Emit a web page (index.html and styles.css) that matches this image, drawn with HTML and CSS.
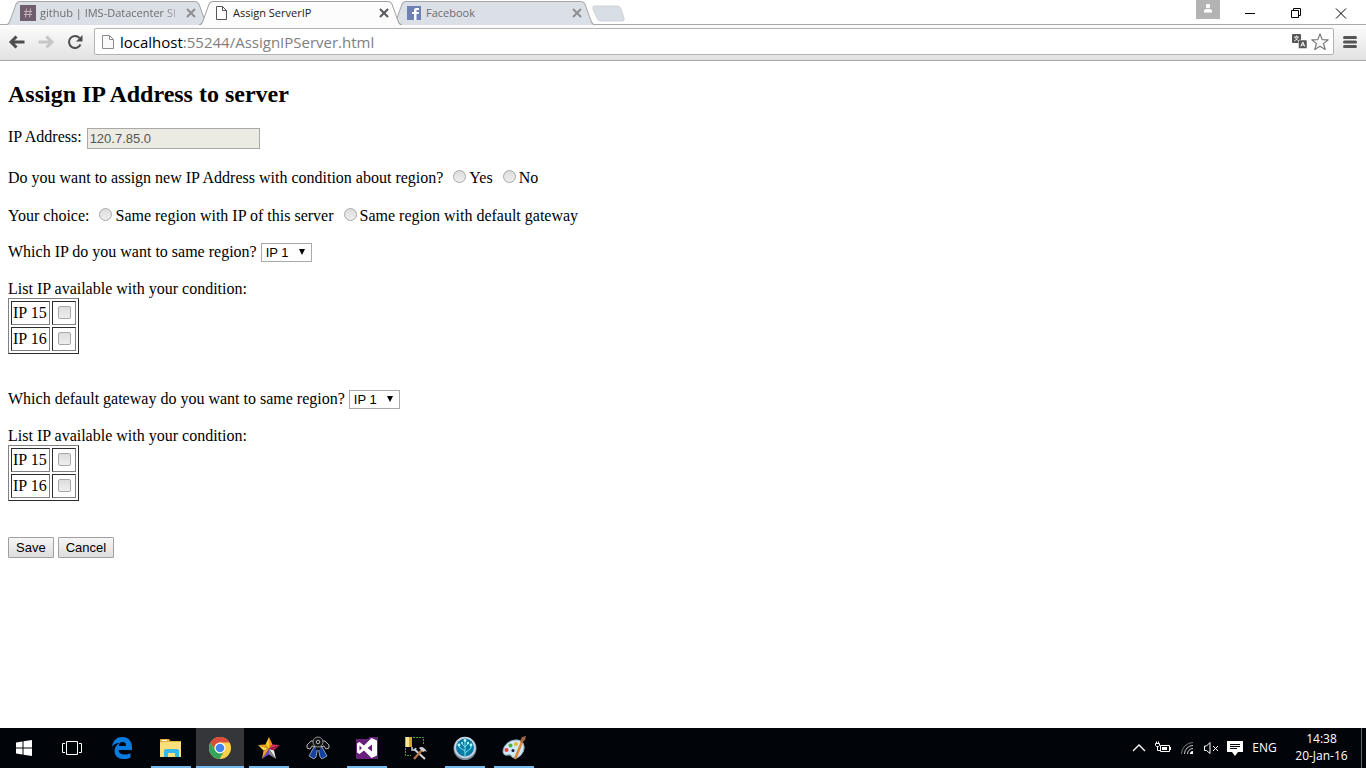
FILE: index.html
```html
<!DOCTYPE html>
<html lang="en">
<head>
<meta charset="utf-8">
<title>Assign ServerIP</title>
<link rel="stylesheet" href="styles.css">
</head>
<body>
<header class="browser">
  <div class="tabstrip">
    <div class="tab">
      <svg class="tab-shape" viewBox="0 0 203 24" preserveAspectRatio="none"><path d="M0 24C3 23.500 3 22 4 20L10 4C11 2 12 1.500 14 1.500H189C191 1.500 192 2 193 4L199 20C200 22 200 23.500 203 24" fill="#dbdfe6" stroke="#a3a6aa"/></svg>
      <svg class="favicon" viewBox="0 0 16 16"><path fill="#705e6d" d="M0 0h16v16H0z"/><path d="M6.500 3.500l-1 9M10.500 3.500l-1 9M4 6.500h8M4 9.500h8" stroke="#c3b3bf" fill="none"/></svg>
      <a class="tab-title faded" href="#">github | IMS-Datacenter SI</a>
      <button class="tab-close" aria-label="Close github tab"><svg viewBox="0 0 8 8"><path d="M0 0l8 8M8 0L0 8"/></svg></button>
    </div>
    <div class="tab active">
      <svg class="tab-shape" viewBox="0 0 203 24" preserveAspectRatio="none"><path d="M0 24C3 23.500 3 22 4 20L10 4C11 2 12 1.500 14 1.500H189C191 1.500 192 2 193 4L199 20C200 22 200 23.500 203 24" fill="#fcfcfc" stroke="#a0a0a0"/></svg>
      <svg class="favicon" viewBox="0 0 16 16"><path d="M3.500 1.500h6l4 4v9h-10zM9.500 1.500v4h4" fill="#fff" stroke="#555"/></svg>
      <a class="tab-title" href="#">Assign ServerIP</a>
      <button class="tab-close" aria-label="Close Assign ServerIP tab"><svg viewBox="0 0 8 8"><path d="M0 0l8 8M8 0L0 8"/></svg></button>
    </div>
    <div class="tab">
      <svg class="tab-shape" viewBox="0 0 203 24" preserveAspectRatio="none"><path d="M0 24C3 23.500 3 22 4 20L10 4C11 2 12 1.500 14 1.500H189C191 1.500 192 2 193 4L199 20C200 22 200 23.500 203 24" fill="#dbdfe6" stroke="#a3a6aa"/></svg>
      <svg class="favicon" viewBox="0 0 16 16"><path fill="#6f80b5" d="M1 1h14v14H1z"/><path fill="#fff" d="M8 15V9H6V7h2V5.500C8 3.500 9 3 11 3h2v2h-1.500c-1 0-1 .5-1 1v1H13l-.4 2h-2.100v6z"/></svg>
      <a class="tab-title" href="#">Facebook</a>
      <button class="tab-close" aria-label="Close Facebook tab"><svg viewBox="0 0 8 8"><path d="M0 0l8 8M8 0L0 8"/></svg></button>
    </div>
    <button class="new-tab" aria-label="New tab"><svg viewBox="0 0 34 17"><path d="M3 1H25q3 0 4 3l3 9q1 3-2 3H9q-3 0-4-3L1 4q-1-3 2-3z" fill="#d9dee5" stroke="#cdd1d8"/></svg></button>
    <div class="window-controls">
      <button class="profile" aria-label="Profile"><svg viewBox="0 0 24 19"><circle cx="12" cy="6" r="2.200"/><path d="M8 12.500V11q0-2 2.500-2h3q2.500 0 2.500 2v1.500z"/></svg></button>
      <button class="win" aria-label="Minimize"><svg viewBox="0 0 12 12"><path d="M1 6.500h10"/></svg></button>
      <button class="win" aria-label="Restore"><svg viewBox="0 0 12 12"><path d="M1.500 3.500h7v7h-7zM3.500 3V1.500h7v7H9"/></svg></button>
      <button class="win" aria-label="Close"><svg viewBox="0 0 12 12"><path d="M1 1.500l10 10M11 1.500l-10 10"/></svg></button>
    </div>
  </div>
  <div class="toolbar">
    <button class="nav" aria-label="Back"><svg viewBox="0 0 16 14"><path d="M15.500 7H2M7.500 1.500L2 7l5.500 5.500" stroke="#4d4d4d"/></svg></button>
    <button class="nav" aria-label="Forward"><svg viewBox="0 0 16 14"><path d="M.500 7H14M8.500 1.500L14 7l-5.500 5.500" stroke="#c6c6c6"/></svg></button>
    <button class="nav reload" aria-label="Reload"><svg viewBox="0 0 16 16"><path d="M13.500 10.500A6 6 0 1 1 12.500 4" stroke="#4d4d4d"/><path d="M15.500 1v6.500H9z" fill="#4d4d4d" stroke="none"/></svg></button>
    <div class="address">
      <svg class="page-icon" viewBox="0 0 14 16"><path d="M1.500 1.500h7l4 4v9h-11zM8.500 1.500v4h4" fill="#fafafa" stroke="#8c8c8c"/></svg>
      <span class="url" role="textbox" aria-label="Address"><b>localhost</b>:55244/AssignIPServer.html</span>
      <button class="tool translate" aria-label="Translate"><svg viewBox="0 0 15 15"><rect width="9" height="9" rx="1" fill="#555"/><path d="M2 3h5M4.500 1.500V3M6 3Q5 6 2 7M3 3q1 3 4 4" stroke="#fff" fill="none" stroke-width=".8"/><rect x="6.500" y="6" width="8.500" height="8.500" rx="1" fill="#555" stroke="#fff" stroke-width=".5"/><path d="M8.800 12.500l2-4.500 2 4.500M9.500 11h2.600" stroke="#fff" fill="none"/></svg></button>
      <button class="tool star" aria-label="Bookmark"><svg viewBox="0 0 18 18"><path d="M9 1l2.200 5.600 6 .2-4.700 3.800 1.700 5.900L9 13.200l-5.200 3.300 1.700-5.900L.8 6.800l6-.2z" fill="#fff" stroke="#777" stroke-width="1.200" stroke-linejoin="round"/></svg></button>
    </div>
    <button class="nav menu" aria-label="Menu"><svg viewBox="0 0 14 14"><path d="M1.500 2.500h11M1.500 7h11M1.500 11.500h11" stroke="#555" stroke-linecap="round" stroke-width="3"/></svg></button>
  </div>
</header>

<main class="page">
  <form>
    <h2>Assign IP Address to server</h2>
    <p class="row field"><label for="ip">IP Address:</label><input class="ip-field" id="ip" type="text" value="120.7.85.0" disabled></p>
    <p class="row">Do you want to assign new IP Address with condition about region?
      <input id="yes" type="radio" name="condition"><label for="yes">Yes</label>
      <input id="no" type="radio" name="condition"><label for="no">No</label></p>
    <p class="row">Your choice:
      <input id="same-ip" type="radio" name="choice"><label for="same-ip">Same region with IP of this server</label>
      <input id="same-gw" type="radio" name="choice"><label for="same-gw">Same region with default gateway</label></p>
    <section class="group">
      <p class="select-row"><label for="which-ip">Which IP do you want to same region?</label> <span class="select"><select id="which-ip"><option>IP 1</option></select></span></p>
      <p class="list-label">List IP available with your condition:</p>
      <table class="ips">
        <tr><td><label for="a15">IP 15</label></td><td><input id="a15" type="checkbox"></td></tr>
        <tr><td><label for="a16">IP 16</label></td><td><input id="a16" type="checkbox"></td></tr>
      </table>
    </section>
    <section class="group">
      <p class="select-row"><label for="which-gw">Which default gateway do you want to same region?</label> <span class="select"><select id="which-gw"><option>IP 1</option></select></span></p>
      <p class="list-label">List IP available with your condition:</p>
      <table class="ips">
        <tr><td><label for="b15">IP 15</label></td><td><input id="b15" type="checkbox"></td></tr>
        <tr><td><label for="b16">IP 16</label></td><td><input id="b16" type="checkbox"></td></tr>
      </table>
    </section>
    <div class="actions"><button class="push" type="button">Save</button><button class="push" type="button">Cancel</button></div>
  </form>
</main>

<footer class="taskbar">
  <div class="apps system">
    <button class="app" aria-label="Start"><svg viewBox="0 0 24 24" fill="#fff"><path d="M4 6.500l6.500-1v6H4zM11.500 5.300L20 4v7.500h-8.500zM4 12.500h6.500v6L4 17.600zM11.500 12.500H20V20l-8.500-1.300z"/></svg></button>
    <button class="app" aria-label="Task view"><svg viewBox="0 0 24 24" fill="none" stroke="#fff"><path d="M6.500 5.500h11v13h-11zM5 7.500H2.500v9H5M19 7.500h2.500v9H19"/></svg></button>
  </div>
  <div class="apps">
    <button class="app" aria-label="Edge"><svg viewBox="0 0 24 24"><path fill="#0a7ce0" d="M2 11C3 4 7 1 12.500 1 19 1 22 6 22 11v3H8.500c.3 3 3 4.500 6 4.500 2.500 0 4.500-.5 6-1.500v4.500c-2 1-4 1.500-7 1.500C8 23 4.500 19.500 4.500 15c0-3.500 2-6.500 5-8-3.500 0-6 1.500-7.500 4zm6.700-1H16c0-2.500-1-4-3.300-4S9 7.500 8.700 10z"/></svg></button>
    <button class="app running" aria-label="File Explorer"><svg viewBox="0 0 24 24"><path fill="#dfae3c" d="M1 3h9l1.500 2H22v16H1z"/><path fill="#fbdf7b" d="M2 6h20v15H1V7z"/><path fill="#fff" d="M3 4h5v1H3z"/><path fill="#35b7e8" d="M5 21v-6q0-2 2-2h11q2 0 2 2v6h-4v-4H9v4z"/></svg></button>
    <button class="app running current" aria-label="Chrome"><svg viewBox="0 0 24 24"><circle cx="12" cy="12" r="11" fill="#fdd04a"/><path d="M2.500 6.500A11 11 0 0 1 21.500 6.500H12a5.500 5.500 0 0 0-5 8z" fill="#dc4a3d"/><path d="M2.500 6.500A11 11 0 0 0 11.500 23l5-8.500q-6 5-9.300 0z" fill="#34a35b"/><circle cx="12" cy="12" r="5.400" fill="#fff"/><circle cx="12" cy="12" r="4.300" fill="#4284ef"/></svg></button>
    <button class="app running" aria-label="Star tool"><svg viewBox="0 0 24 24"><path fill="#ffce35" d="M12 1v12L8.500 8.500z"/><path fill="#f29323" d="M12 1l3.500 7.500L12 13z"/><path fill="#f4a326" d="M1 9l7.500-.500L12 13z"/><path fill="#ffdc46" d="M1 9l5.500 5.500L12 13z"/><path fill="#dc315d" d="M23 9l-7.500-.500L12 13z"/><path fill="#a81f45" d="M23 9l-6 5.500-5-1.500z"/><path fill="#eee" d="M12 13l5 1.500L19 23z"/><path fill="#888" d="M12 13v5.500l7 4.500z"/><path fill="#6946cc" d="M12 13v5.500L5 23z"/><path fill="#f3a026" d="M12 13l-5.500 1.500L5 23z"/></svg></button>
    <button class="app" aria-label="Figure tool"><svg viewBox="0 0 24 24" stroke="#b5b9bd" fill="#111"><path d="M8 5H5L1 9v3l3 1 2-3 4 1M16 5h3l4 4v3l-3 1-2-3-4 1"/><path fill="#1440a4" stroke-width=".8" d="M8 11L3 20l5 3 2-2 1.500-8zM16 11l5 9-5 3-2-2-1.500-8z"/><path stroke="none" d="M9 9h6l-1 5h-4z"/><circle cx="12" cy="6" r="5" stroke="#8c9094"/><circle cx="12" cy="6" r="1.800"/></svg></button>
    <button class="app running" aria-label="Visual Studio"><svg viewBox="0 0 24 24"><path fill="#68217a" d="M1 3h13V1h9v22H1z"/><path fill="#fff" fill-rule="evenodd" d="M16.500 2L22 4.500v15L16.500 22 9 14.500 4.500 18 2 16.500v-9L4.500 6 9 9.500zM17 8.500L12.500 12l4.500 3.500zM4.500 9.500v5L7 12z"/></svg></button>
    <button class="app" aria-label="Database tools"><svg viewBox="0 0 24 24"><path d="M9 1.500h10.500V9M1.500 12v7.500H7" fill="none" stroke="#4f9a38" stroke-dasharray="2 1"/><path fill="#dda22b" d="M1 1h7v10H1z"/><path fill="#ffe696" d="M2 1h3v10H2z"/><path d="M10 13l11 10" stroke="#d2d6da" stroke-width="2"/><path d="M8 11v3h3l1-2" fill="none" stroke="#c4d0dd" stroke-width="1.500"/><path d="M10 23l8-9" stroke="#b97743" stroke-width="2.200"/><path d="M15 12q4-3 8 4l-2-1-2 1z" fill="#ccd0d6"/></svg></button>
    <button class="app running" aria-label="SourceTree"><svg viewBox="0 0 24 24"><circle cx="12" cy="12.500" r="11.500" fill="#788b9c"/><circle cx="12" cy="11.500" r="10.700" fill="#cad6df"/><circle cx="12" cy="11.500" r="9" fill="#087ca7"/><path d="M12 20V5M12 15L6 11V9M12 17l6-5V9M12 11l3-3M12 11L9 8" fill="none" stroke="#76e0eb"/><g fill="#b2fff1"><circle cx="12" cy="4.500" r="1.400"/><circle cx="6" cy="9" r="1.400"/><circle cx="18" cy="9" r="1.400"/><circle cx="9" cy="7" r="1"/><circle cx="15" cy="7" r="1.200"/></g></svg></button>
    <button class="app running" aria-label="Paint"><svg viewBox="0 0 24 24"><path fill="#d2e8f4" stroke="#8db3c9" d="M9 5q8-3 12 2 3 6-2 12-5 5-9 2-1-3-4-2-5 1-5-4Q2 8 9 5z"/><circle cx="4.500" cy="14" r="2" fill="#dd463d"/><circle cx="8.500" cy="9.500" r="2" fill="#52ab3c"/><circle cx="14" cy="8" r="2" fill="#edb72d"/><circle cx="11" cy="14.500" r="1.500" fill="#123"/><path d="M13 23l7-17" stroke="#dc8733" stroke-width="2.500"/><path fill="#9a6540" d="M18 5l2-4 4-1-1 4-3 3z"/></svg></button>
  </div>
  <div class="tray">
    <button class="tray-button" aria-label="Show hidden icons"><svg viewBox="0 0 16 16"><path d="M2 11l6-6 6 6" stroke-width="1.300"/></svg></button>
    <button class="tray-button" aria-label="Battery"><svg viewBox="0 0 16 16"><path d="M5.500 5.500h9v6h-9zM15.500 7v3M2.500 7v3.500h3M1.500 1.500v2M3.500 1.500v2"/><path fill="#fff" stroke="none" d="M7 7h5v3H7z"/><path fill="#010409" d="M.500 3.500h4v2l-1 1h-2l-1-1z"/></svg></button>
    <button class="tray-button" aria-label="Wireless network"><svg viewBox="0 0 16 16"><path d="M2.500 14A11.500 11.500 0 0 1 14 2.500" stroke="#777"/><path d="M5.500 14A8.500 8.500 0 0 1 14 5.500M8.500 14A5.500 5.500 0 0 1 14 8.500" stroke="#ccc"/><path d="M14 11v3h-3a3 3 0 0 1 3-3z" fill="#fff" stroke="none"/></svg></button>
    <button class="tray-button" aria-label="Volume muted"><svg viewBox="0 0 16 16"><path d="M1.500 6v4.500h2l3.500 3V2.500L3.500 6zM10 6l5 5M15 6l-5 5"/></svg></button>
    <button class="tray-button" aria-label="Notifications"><svg viewBox="0 0 16 16"><path fill="#fff" stroke="none" d="M0 1h16v11h-5l-3 4-3-4H0z"/><path stroke="#05070b" d="M3 4.500h10M3 6.500h10M3 8.500h7"/></svg></button>
    <button class="language">ENG</button>
    <button class="clock"><span>14:38</span><span>20-Jan-16</span></button>
    <button class="show-desktop" aria-label="Show desktop"></button>
  </div>
</footer>
</body>
</html>
```
FILE: styles.css
```css
* { box-sizing: border-box; }
body {
  margin: 0;
  min-height: 100vh;
  display: flex;
  flex-direction: column;
  background: #fff;
  color: #000;
  font: 16px/18px "Liberation Serif", "Times New Roman", serif;
}
button { border: 0; padding: 0; background: none; color: inherit; }
svg { display: block; }

/* Browser frame */
.browser { font-family: "Open Sans", "Noto Sans", sans-serif; }
.tabstrip { display: flex; height: 24px; padding-left: 6px; }
.tab {
  position: relative;
  display: flex;
  align-items: center;
  width: 203px;
  height: 25px;
  padding: 1px 14px 0;
  color: #6b6e72;
}
.tab + .tab { margin-left: -10px; }
.tab.active { z-index: 2; color: #222; }
.tab-shape { position: absolute; inset: 0; width: 100%; height: 100%; }
.favicon { position: relative; width: 16px; height: 16px; margin-right: 4px; }
.tab-title {
  position: relative;
  flex: 1;
  min-width: 0;
  overflow: hidden;
  white-space: nowrap;
  font-size: 11px;
  line-height: 18px;
  color: inherit;
  text-decoration: none;
}
.faded { mask-image: linear-gradient(90deg, #000 84%, transparent); }
.tab-close { position: relative; width: 8px; height: 8px; margin-left: 2px; }
.tab-close svg { width: 8px; height: 8px; overflow: visible; fill: none; stroke: #8b8e92; stroke-width: 2; }
.active .tab-close svg { stroke: #555; }
.new-tab { width: 34px; height: 17px; margin: 5px 0 0 -3px; }
.window-controls { display: flex; margin: 0 2px 0 auto; }
.profile { width: 24px; height: 19px; margin-right: 19px; background: #b3b3b3; }
.profile svg { width: 24px; height: 19px; fill: #fff; }
.win { display: grid; place-items: center; width: 45px; height: 26px; }
.win:last-child { width: 46px; }
.win svg { width: 12px; height: 12px; fill: none; stroke: #000; }
.window-controls .win:nth-child(2) { width: 22px; margin-right: 12px; }

.toolbar {
  display: flex;
  align-items: center;
  height: 37px;
  padding: 0 9px 2px 8px;
  border-top: 1px solid #a8a8a8;
  border-bottom: 1px solid #a8a8a8;
  background: linear-gradient(#fcfcfc, #e2e2e2);
}
.nav { width: 18px; margin-right: 11px; }
.nav svg { width: 18px; height: 14px; fill: none; stroke-width: 3; }
.nav.reload { margin-right: 10px; }
.reload svg { height: 16px; stroke-width: 2; }
.address {
  flex: 1;
  display: flex;
  align-items: center;
  height: 27px;
  padding: 0 4px 0 6px;
  border: 1px solid #b4b4b4;
  border-radius: 2px;
  background: #fff;
}
.page-icon { width: 14px; height: 16px; margin-right: 5px; }
.url { flex: 1; font-size: 15px; line-height: 20px; color: #808080; }
.url b { font-weight: 400; color: #000; }
.translate { margin-right: 4px; }
.translate svg { width: 15px; height: 15px; }
.star svg { width: 18px; height: 18px; }
.nav.menu { width: 14px; margin: 0 0 0 9px; }
.menu svg { width: 14px; height: 14px; }

/* Form */
.page { flex: 1; padding: 20px 8px 0; }
h2 { margin: 0 0 20px; font-size: 24px; line-height: 27px; }
p { margin: 0; }
.row { margin-bottom: 20px; }
.row:nth-of-type(3) { margin-bottom: 18px; }
.field { display: flex; gap: 5px; }
.ip-field {
  width: 173px;
  height: 21px;
  padding: 1px 2px;
  border: 1px solid #a9a9a9;
  background: #ebebe4;
  color: #545454;
  font: 13px "Liberation Sans", Arial, sans-serif;
}
input[type="radio"], input[type="checkbox"] {
  appearance: none;
  width: 13px;
  height: 13px;
  border: 1px solid #a8a8a8;
  background: linear-gradient(#ddd, #eee);
}
input[type="radio"] { margin: 0 3px 0 6px; border-radius: 50%; vertical-align: baseline; }
input[type="checkbox"] { display: block; margin: 3px 3px 4px 4px; border-radius: 2px; }
.group { margin-bottom: 36px; }
.select-row { display: flex; gap: 4px; height: 19px; margin-bottom: 18px; }
.select { position: relative; height: 19px; }
.select::after {
  content: "";
  position: absolute;
  top: 6px;
  right: 7px;
  border: solid transparent;
  border-width: 6px 3px 0;
  border-top-color: #000;
  pointer-events: none;
}
select {
  display: block;
  appearance: none;
  width: 51px;
  height: 19px;
  padding: 0 4px;
  border: 1px solid #a9a9a9;
  border-radius: 0;
  background: #fff;
  color: #000;
  font: 13px "Liberation Sans", Arial, sans-serif;
}
.ips {
  border: 1px solid;
  border-color: #808080 #2c2c2c #2c2c2c #808080;
  border-spacing: 2px;
}
.ips td {
  padding: 1px;
  border: 1px solid;
  border-color: #2c2c2c #808080 #808080 #2c2c2c;
}
.ips td:first-child { min-width: 39px; }
.actions { display: flex; gap: 4px; }
.push {
  height: 21px;
  padding: 0 7px;
  border: 1px solid #a0a0a0;
  border-radius: 1px;
  background: linear-gradient(#f6f6f6, #ddd);
  font: 13px "Liberation Sans", Arial, sans-serif;
}

/* Taskbar */
.taskbar {
  display: flex;
  justify-content: space-between;
  height: 40px;
  background: #010409;
  color: #fff;
  font-family: "Open Sans", "Noto Sans", sans-serif;
}
.apps { display: flex; gap: 1px; margin-left: 2px; }
.apps.system { gap: 0; margin: 0; }
.app { position: relative; display: grid; place-items: center; width: 48px; height: 40px; }
.app svg { width: 24px; height: 24px; }
.running::after {
  content: "";
  position: absolute;
  inset: auto 4px 0;
  height: 2px;
  background: #76b9ed;
}
.current { background: #34363a; }
.current::after { inset: auto 0 0; }
.tray { display: flex; align-items: center; margin-left: auto; }
.tray-button { display: grid; place-items: center; width: 24px; height: 40px; }
.tray-button svg { width: 16px; height: 16px; fill: none; stroke: #fff; }
.language { width: 35px; font: 12px/16px "Open Sans", sans-serif; }
.clock {
  display: flex;
  flex-direction: column;
  align-items: center;
  width: 79px;
  padding-bottom: 2px;
  font: 12px/17px "Open Sans", sans-serif;
}
.show-desktop { width: 5px; height: 40px; border-left: 1px solid #63656a; }
```
